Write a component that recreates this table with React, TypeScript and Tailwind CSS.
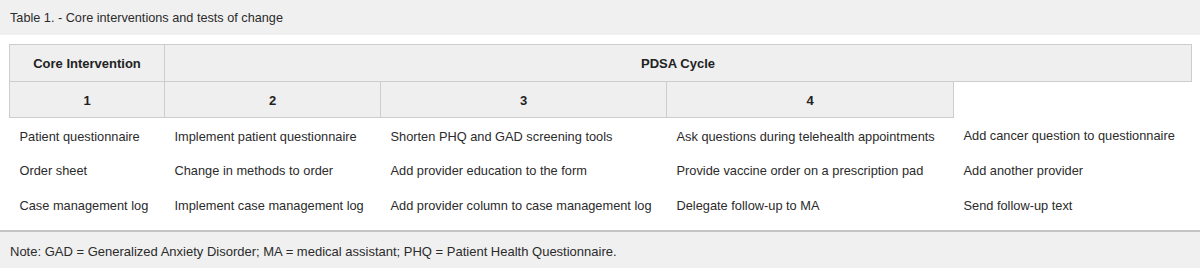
const ROWS = [
  [
    "Patient questionnaire",
    "Implement patient questionnaire",
    "Shorten PHQ and GAD screening tools",
    "Ask questions during telehealth appointments",
    "Add cancer question to questionnaire",
  ],
  [
    "Order sheet",
    "Change in methods to order",
    "Add provider education to the form",
    "Provide vaccine order on a prescription pad",
    "Add another provider",
  ],
  [
    "Case management log",
    "Implement case management log",
    "Add provider column to case management log",
    "Delegate follow-up to MA",
    "Send follow-up text",
  ],
];

const COL_WIDTHS = ["w-[155px]", "w-[216px]", "w-[286px]", "w-[287px]", "w-[238px]"];

export default function App() {
  return (
    <div className="w-[1200px] h-[268px] overflow-hidden bg-white font-['Liberation_Sans',Arial,sans-serif] text-[#2b2b2b]">
      {/* Caption */}
      <div className="h-[35px] bg-[#f0f0f0] px-[10px] pt-[3px] flex items-center text-[12.7px]">
        Table 1. - Core interventions and tests of change
      </div>

      {/* Table */}
      <div className="mt-[9px] mx-[9px]">
        <table className="w-[1182px] table-fixed border-collapse text-[12.8px]">
          <colgroup>
            {COL_WIDTHS.map((w, i) => (
              <col key={i} className={w} />
            ))}
          </colgroup>
          <thead>
            <tr className="h-[37px]">
              <th className="border border-[#cdcdcd] bg-[#efefef] text-[13px] font-bold text-[#222] text-center pt-[2px] pb-0 px-0">
                Core Intervention
              </th>
              <th
                colSpan={4}
                className="border border-[#cdcdcd] bg-[#efefef] text-[13px] font-bold text-[#222] text-center pt-[2px] pb-0 px-0"
              >
                PDSA Cycle
              </th>
            </tr>
            <tr className="h-[36px]">
              {["1", "2", "3", "4"].map((n) => (
                <th
                  key={n}
                  className="border border-[#cdcdcd] bg-[#efefef] text-[13px] font-bold text-[#222] text-center pt-[2px] pb-0 px-0"
                >
                  {n}
                </th>
              ))}
              <th className="p-0" />
            </tr>
          </thead>
          <tbody>
            {ROWS.map((row) => (
              <tr key={row[0]} className="h-[35px]">
                {row.map((cell) => (
                  <td key={cell} className="pl-[10px] pr-0 pt-[2px] pb-0 whitespace-nowrap align-middle">
                    {cell}
                  </td>
                ))}
              </tr>
            ))}
          </tbody>
        </table>
      </div>

      {/* Note */}
      <div className="mt-[7px] h-[39px] border-t-2 border-[#c4c4c4] bg-[#f0f0f0] px-[10px] pt-[3px] flex items-center text-[13px]">
        Note: GAD = Generalized Anxiety Disorder; MA = medical assistant; PHQ = Patient Health Questionnaire.
      </div>
    </div>
  );
}
